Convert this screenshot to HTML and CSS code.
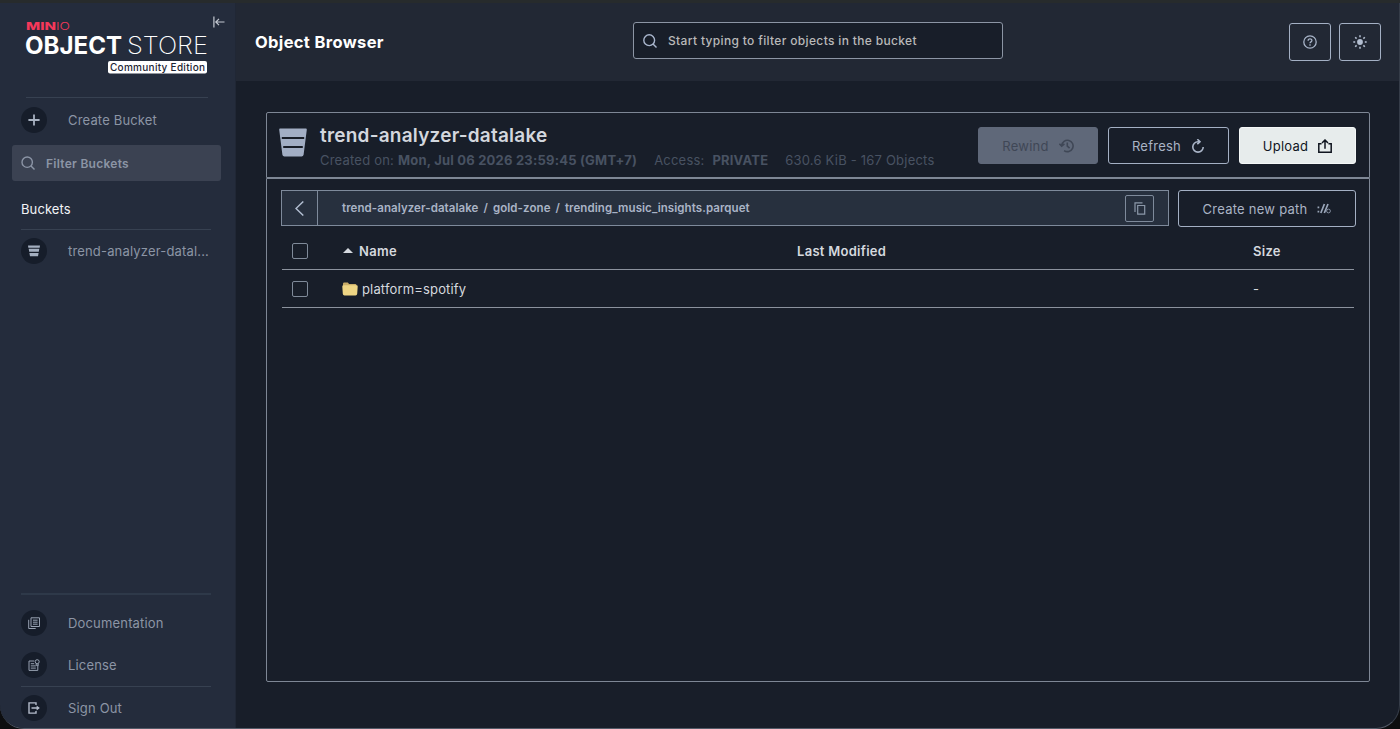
FILE: index.html
```html
<!DOCTYPE html>
<html lang="en">
  <head>
    <meta charset="UTF-8">
    <title>MinIO Object Store</title>
    <link rel="stylesheet" href="styles.css">
  </head>
  <body>
    <div class="window">
      <aside class="sidebar">
        <div class="brand">
          <svg class="logo" width="184" height="57" viewBox="0 0 184 57">
            <g fill="#f5385a">
              <text class="logo-min" x="1" y="9.500" textLength="30" lengthAdjust="spacingAndGlyphs">MIN</text>
              <text class="logo-io" x="31" y="9.500" textLength="14" lengthAdjust="spacingAndGlyphs">IO</text>
            </g>
            <text class="logo-object" x="0" y="34" textLength="97" lengthAdjust="spacingAndGlyphs">OBJECT</text>
            <text class="logo-store" x="102" y="34" textLength="81" lengthAdjust="spacingAndGlyphs">STORE</text>
            <rect x="83" y="41" width="99" height="12.500" rx="2" fill="#fff"/>
            <text class="logo-edition" x="85" y="50.500" textLength="95">Community Edition</text>
          </svg>
          <svg class="collapse" width="12" height="12" viewBox="0 0 12 12" fill="none" stroke="#c3c8d1" stroke-width="1.2">
            <path d="M.9 .5v11M11.5 6H3M6 2.8L2.8 6 6 9.2"/>
          </svg>
        </div>
        <hr class="brand-line">
        <a class="item create">
          <span class="dot"><svg width="12" height="12" viewBox="0 0 12 12" stroke="#a8b2c1" stroke-width="1.8"><path d="M6 .4v11.2M.4 6h11.2"/></svg></span>
          Create Bucket
        </a>
        <div class="filter">
          <svg width="14" height="14" viewBox="0 0 14 14" fill="none" stroke="#8c95a6" stroke-width="1.4"><circle cx="6.2" cy="6.2" r="5.2"/><path d="M10 10l3.5 3.5"/></svg>
          Filter Buckets
        </div>
        <div class="group">Buckets</div>
        <hr>
        <a class="item bucket">
          <span class="dot"><svg width="12" height="12" viewBox="0 0 12 12" fill="#a4afc0"><path d="M0 .5h12l-.3 2.2H.3zM.7 3.8h10.6l-.5 3H1.2zM1.4 7.9h9.2L10 11.3H2z"/></svg></span>
          trend-analyzer-datal...
        </a>
        <div class="bottom">
          <hr class="thick">
          <a class="item docs">
            <span class="dot"><svg width="12" height="12" viewBox="0 0 12 12" fill="none" stroke="#97a1b1"><path d="M3 .8h8.5v8.7H3zM.7 2.8v8.7h7M5 3.2h4.6M5 5.2h4.6M5 7.2h4.6"/></svg></span>
            Documentation
          </a>
          <a class="item license">
            <span class="dot"><svg width="12" height="12" viewBox="0 0 12 12" fill="none" stroke="#97a1b1"><path d="M6.3 2H1v9.4h8.8V6M2.8 4.7h3.4M2.8 6.9h5M2.8 9.1h5"/><circle cx="9.2" cy="2.7" r="2"/><path d="M8.2 4.5v2l1-.6 1 .6v-2"/></svg></span>
            License
          </a>
          <hr>
          <a class="item signout">
            <span class="dot"><svg width="12" height="12" viewBox="0 0 12 12" fill="none" stroke="#b4bccb" stroke-width="1.4"><path d="M8 3V.9H1v10.2h7V9M3.5 6h7"/><path d="M8.6 3.6L11.8 6 8.6 8.4z" fill="#b4bccb" stroke="none"/></svg></span>
            Sign Out
          </a>
        </div>
      </aside>

      <main class="main">
        <header class="topbar">
          <h1>Object Browser</h1>
          <div class="search">
            <svg width="14" height="14" viewBox="0 0 14 14" fill="none" stroke="#a9b6cd" stroke-width="1.4"><circle cx="6.2" cy="6.2" r="5.4"/><path d="M10 10l3.5 3.5"/></svg>
            Start typing to filter objects in the bucket
          </div>
          <div class="tools">
            <button class="btn square"><svg width="14" height="14" viewBox="0 0 14 14" fill="none" stroke="#a9b5c9" stroke-width="1.3"><circle cx="7" cy="7" r="6.2"/><path d="M5.1 5.7c0-2.5 3.8-2.4 3.8-.2 0 1.4-1.9 1.3-1.9 2.8M7 9.3v1.4"/></svg></button>
            <button class="btn square"><svg width="14" height="14" viewBox="0 0 14 14" stroke="#b4bfd1" stroke-width="1.5"><circle cx="7" cy="7" r="2.9" fill="#b4bfd1" stroke="none"/><path d="M7 .3v1.9M7 11.8v1.9M.3 7h1.9M11.8 7h1.9M2.2 2.2l1.4 1.4M10.4 10.4l1.4 1.4M2.2 11.8l1.4-1.4M10.4 3.6l1.4-1.4"/></svg></button>
          </div>
        </header>

        <section class="panel">
          <div class="panel-head">
            <svg class="bucket-icon" width="28" height="29" viewBox="0 0 28 29"><path d="M1.2.5h25.6q1.2 0 1 1.2L24.6 26.8q-.3 1.7-2 1.7H5.4q-1.7 0-2-1.7L.2 1.7Q0 .5 1.2.5z" fill="#a2aec4"/><path d="M2.8 10h22.4M4.2 19h19.6" stroke="#181d27" stroke-width="2"/></svg>
            <div class="info">
              <h2>trend-analyzer-datalake</h2>
              <div class="meta">
                <span class="created">Created on: <b>Mon, Jul 06 2026 23:59:45 (GMT+7)</b></span>
                <span class="access">Access: <b>PRIVATE</b></span>
                <span class="usage">630.6 KiB - 167 Objects</span>
              </div>
            </div>
            <div class="actions">
              <button class="btn rewind">Rewind
                <svg width="15" height="14" viewBox="0 0 15 14" fill="none" stroke="#3f4756" stroke-width="1.6"><path d="M2.7 6.5a5.7 5.7 0 1 1 2.4 5.100M.4 4.700l2.300 2.500L5.400 4.900M8.300 3.500v3.700l2.300 2"/></svg>
              </button>
              <button class="btn refresh">Refresh
                <svg width="14" height="14" viewBox="0 0 14 14" fill="none" stroke="#aab5c8" stroke-width="1.6"><path d="M8.800 2.700H7a5.200 5.200 0 1 0 5.200 5.200"/><path d="M6.300 .2l2.700 2.500-2.700 2.500"/></svg>
              </button>
              <button class="btn upload">Upload
                <svg width="14" height="14" viewBox="0 0 14 14" fill="none" stroke="#10151f" stroke-width="1.5"><path d="M3.600 4.700H.8v8.500h12.400V4.700h-2.800M7 9.700V1.300M4 4l3-3 3 3"/></svg>
              </button>
            </div>
          </div>

          <div class="panel-body">
            <div class="path-row">
              <div class="path">
                <span class="back"><svg width="9" height="15" viewBox="0 0 9 15" fill="none" stroke="#b0bccf" stroke-width="1.5"><path d="M8.300 .5L1 7.500l7.300 7"/></svg></span>
                <span class="crumbs">trend-analyzer-datalake<i>/</i>gold-zone<i>/</i>trending_music_insights.parquet</span>
                <span class="copy"><svg width="12" height="13" viewBox="0 0 12 13" fill="none" stroke="#8c98a9" stroke-width="1.2"><path d="M3.700 3.500h7v8.700h-7zM1 10V.8h7.500"/></svg></span>
              </div>
              <button class="btn newpath">Create new path
                <svg width="14" height="11" viewBox="0 0 14 11" fill="none" stroke="#9aa6b9" stroke-width="1.7"><path d="M1.400 3.500v1.700M1.400 7.800v1.700M3.800 10L7.400 1M7.300 10L11 1"/><circle cx="11.500" cy="8" r="1.900" stroke-width=".8"/></svg>
              </button>
            </div>

            <div class="row head">
              <span class="check"></span>
              <span class="name"><span class="sort"></span>Name</span>
              <span class="modified">Last Modified</span>
              <span class="size">Size</span>
            </div>
            <div class="row">
              <span class="check"></span>
              <span class="name"><svg class="folder" width="16" height="14" viewBox="0 0 16 14"><path d="M1 3V1.800Q1 .5 2.300.5h3.500l1.300 1.400h6q1.400 0 1.400 1.400V6H1z" fill="#c9ad68"/><path d="M.3 4.400Q.3 3.200 1.500 3.200h13q1.300 0 1.200 1.200l-.5 7.400q-.1 1.700-1.700 1.700h-11Q.9 13.500.8 11.800z" fill="#eed584"/></svg>platform=spotify</span>
              <span class="modified"></span>
              <span class="size">-</span>
            </div>
          </div>
        </section>
      </main>
    </div>
  </body>
</html>
```
FILE: styles.css
```css
* {
  box-sizing: border-box;
}

body, html {
  margin: 0;
  height: 100%;
}

body {
  background: #0d0e10;
  border-top: 3px solid #272b2c;
  font-family: Inter, sans-serif;
  font-size: 13px;
  color: #8c95a5;
  overflow: hidden;
}

.window {
  display: flex;
  height: 726px;
  background: #181e29;
  border-right: 1px solid #353c48;
  border-bottom: 1px solid #535b68;
  border-radius: 0 0 24px 24px;
  overflow: hidden;
}

.sidebar {
  display: flex;
  flex-direction: column;
  width: 236px;
  background: #242c3c;
  border-right: 1px solid #202735;
}

.brand {
  display: flex;
  padding: 13px 0 0 25px;
  height: 94px;
}

.logo-min, .logo-io {
  font-size: 10px;
  font-weight: 800;
}

.logo-io {
  font-weight: 300;
}

.logo-object, .logo-store {
  font-family: Inter, sans-serif;
  font-size: 24px;
  font-weight: 700;
  fill: #fff;
}

.logo-store {
  font-weight: 200;
}

.logo-edition {
  font-size: 10px;
  font-weight: 500;
  fill: #1c2433;
}

.logo {
  margin-top: 4px;
}

.collapse {
  margin-left: 4px;
}

hr {
  width: 190px;
  height: 1px;
  margin: 0 0 0 21px;
  border: 0;
  background: #374151;
  flex: none;
}

hr.brand-line {
  width: 182px;
  margin-left: 26px;
}

hr.thick {
  height: 2px;
  background: #2e3949;
}

.item {
  display: flex;
  align-items: center;
  height: 42px;
  padding-left: 21px;
  letter-spacing: 0.17px;
}

.create {
  height: 43px;
}

.dot {
  display: flex;
  align-items: center;
  justify-content: center;
  width: 26px;
  height: 26px;
  margin-right: 21px;
  border-radius: 50%;
  background: #161d2a;
}

.filter {
  display: flex;
  align-items: center;
  gap: 11px;
  width: 209px;
  height: 36px;
  margin: 4px 0 0 12px;
  padding-left: 9px;
  border-radius: 3px;
  background: #3b4252;
  font-size: 12px;
  font-weight: 600;
  letter-spacing: 0.27px;
}

.group {
  height: 48px;
  padding-left: 21px;
  line-height: 56px;
  letter-spacing: 0.1px;
  color: #f2f4f7;
}

.bottom {
  margin: auto 0 -1px;
}

.docs {
  margin-top: 7px;
}

.main {
  flex: 1;
}

.topbar {
  display: flex;
  align-items: flex-start;
  height: 78px;
  background: #222834;
}

h1 {
  width: 397px;
  margin: 0;
  padding-left: 19px;
  font-size: 16.5px;
  font-weight: 700;
  line-height: 78px;
  letter-spacing: 0.35px;
  color: #fff;
}

.search {
  display: flex;
  align-items: center;
  gap: 11px;
  width: 370px;
  height: 37px;
  margin-top: 19px;
  padding-left: 9px;
  border: 1px solid #8c95a4;
  border-radius: 3px;
  background: #181e29;
  font-size: 12px;
  font-weight: 500;
  letter-spacing: 0.34px;
  color: #b9b9b9;
}

.tools {
  display: flex;
  gap: 8px;
  margin: 20px 18px 0 auto;
}

.btn {
  display: flex;
  align-items: center;
  justify-content: center;
  gap: 10px;
  height: 37px;
  padding: 0;
  border: 1px solid #a4b0c4;
  border-radius: 3px;
  background: none;
  font-family: inherit;
  font-size: 13px;
  letter-spacing: 0.25px;
  color: #aab4c5;
}

.square {
  width: 42px;
  height: 38px;
}

.panel {
  width: 1104px;
  margin: 31px 0 0 30px;
}

.panel-head {
  display: flex;
  height: 66px;
  padding-left: 12px;
  border: 1px solid #7e8795;
  border-radius: 2px 2px 0 0;
}

.bucket-icon {
  margin-top: 15px;
}

.info {
  margin-left: 13px;
}

h2 {
  margin: 11px 0 0;
  font-size: 19px;
  font-weight: 600;
  line-height: 24px;
  letter-spacing: 0.22px;
  color: #d3d7de;
}

.meta {
  display: flex;
  gap: 17px;
  margin-top: 2px;
  line-height: 20px;
  letter-spacing: 0.21px;
  color: #485262;
  white-space: nowrap;
}

.access b {
  margin-left: 4px;
}

.actions {
  display: flex;
  gap: 10px;
  margin: 14px 13px 0 auto;
}

.rewind {
  width: 120px;
  background: #5f6879;
  border-color: #5f6879;
  color: #3f4756;
}

.refresh {
  width: 121px;
}

.upload {
  width: 117px;
  background: #e7ecec;
  border-color: #f4f7f7;
  color: #10151f;
}

.panel-body {
  height: 504px;
  padding: 11px 13px 0 14px;
  border: 1px solid #7e8795;
  border-radius: 0 0 2px 2px;
}

.path-row {
  display: flex;
  justify-content: space-between;
}

.path {
  display: flex;
  align-items: center;
  width: 888px;
  height: 36px;
  border: 1px solid #7e8a9b;
  background: #27303e;
}

.back {
  display: flex;
  align-items: center;
  justify-content: center;
  width: 36px;
  height: 34px;
  border-right: 1px solid #7e8a9b;
}

.crumbs {
  margin-left: 24px;
  font-size: 11.5px;
  font-weight: 600;
  letter-spacing: 0.08px;
  color: #aab4c6;
}

.crumbs i {
  margin: 0 5px;
  font-style: normal;
}

.copy {
  display: flex;
  align-items: center;
  justify-content: center;
  width: 29px;
  height: 27px;
  margin: 0 14px 0 auto;
  border: 1px solid #7e8a9b;
  border-radius: 2px;
}

.newpath {
  width: 178px;
}

.row {
  display: grid;
  grid-template-columns: 60px 455px 456px 1fr;
  align-items: center;
  width: 1072px;
  height: 38px;
  margin-left: 1px;
  border-bottom: 1px solid #8b929d;
  letter-spacing: 0.15px;
  color: #d5d9df;
}

.row.head {
  height: 43px;
  padding-top: 5px;
  font-weight: 600;
  letter-spacing: 0.28px;
}

.check {
  width: 16px;
  height: 16px;
  margin-left: 10px;
  border: 1px solid #7f8a99;
  border-radius: 2px;
}

.name {
  display: flex;
  align-items: center;
}

.sort {
  margin: 0 6px 0 1px;
  border: 5px solid transparent;
  border-top: 0;
  border-bottom: 5px solid #d5d9df;
}

.folder {
  margin-right: 4px;
}
```
